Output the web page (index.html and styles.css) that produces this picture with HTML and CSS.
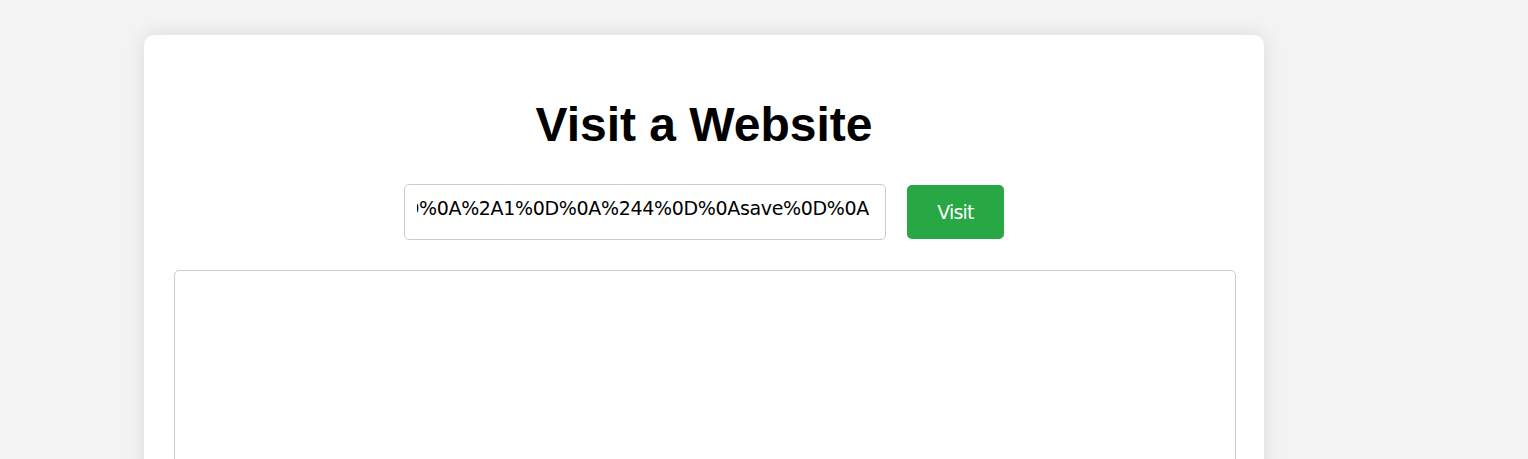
FILE: index.html
```html
<!DOCTYPE html>
<html lang="en">
<head>
<meta charset="utf-8">
<title>Visit a Website</title>
<link rel="stylesheet" href="styles.css">
</head>
<body>
  <div class="card">
    <h1 class="title">Visit a Website</h1>
    <form class="url-row" onsubmit="return false">
      <div class="url-input">
        <div class="url-clip"><span class="url-text">gopher://127.0.0.1:6379/_%2A1%0D%0A%248%0D%0Aflushall%0D%0A%2A3%0D%0A%243%0D%0Aset%0D%0A%241%0D%0A1%0D%0A%2A4%0D%0A%246%0D%0Aconfig%0D%0A%243%0D%0Aset%0D%0A%243%0D%0Adir%0D%0A%2A1%0D%0A%244%0D%0Asave%0D%0A</span></div>
      </div>
      <button class="visit-btn" type="submit">Visit</button>
    </form>
    <div class="frame"></div>
  </div>
</body>
</html>
```
FILE: styles.css
```css
html, body {
  margin: 0;
  padding: 0;
}
body {
  background: #f3f3f3;
  font-family: "Liberation Sans", Arial, sans-serif;
  overflow: hidden;
}
.card {
  box-sizing: border-box;
  width: 1120px;
  margin: 35px 0 0 144px;
  padding: 30px 30px 30px;
  background: #ffffff;
  border-radius: 10px;
  box-shadow: 0 0 20px rgba(0, 0, 0, 0.1);
}
.title {
  margin: 32px 0 32px;
  font-size: 48px;
  font-weight: bold;
  text-align: center;
  color: #000;
}
.url-row {
  display: flex;
  justify-content: center;
  align-items: center;
  gap: 21px;
  margin: 0;
}
.url-input {
  box-sizing: border-box;
  width: 482px;
  height: 56px;
  padding: 0 16px 8px 12px;
  border: 1px solid #cccccc;
  border-radius: 5px;
  display: flex;
  align-items: center;
  font-family: "DejaVu Sans", Verdana, sans-serif;
  font-size: 19px;
  letter-spacing: -0.33px;
  color: #000;
}
.url-clip {
  flex: 1;
  min-width: 0;
  display: flex;
  justify-content: flex-end;
  overflow: hidden;
}
.url-text {
  white-space: nowrap;
  flex-shrink: 0;
}
.visit-btn {
  box-sizing: border-box;
  width: 97px;
  height: 54px;
  padding: 0;
  border: none;
  border-radius: 5px;
  background: #28a745;
  color: #ffffff;
  font-family: "DejaVu Sans", Verdana, sans-serif;
  font-size: 19px;
  letter-spacing: -0.8px;
  cursor: pointer;
}
.frame {
  width: 100%;
  height: 600px;
  margin-top: 30px;
  border: 1px solid #cccccc;
  border-radius: 5px;
}
```
